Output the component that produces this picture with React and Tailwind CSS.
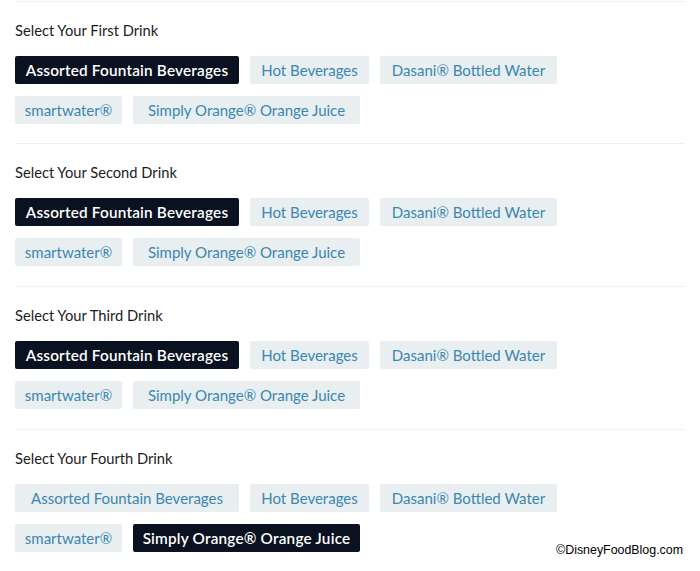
import React, { useState } from 'react';

const DRINKS = [
  { name: "Assorted Fountain Beverages", w: "w-[224px]" },
  { name: "Hot Beverages", w: "w-[119px]" },
  { name: "Dasani® Bottled Water", w: "w-[177px]" },
  { name: "smartwater®", w: "w-[107px]" },
  { name: "Simply Orange® Orange Juice", w: "w-[227px]" },
];

const SECTIONS = [
  { label: "Select Your First Drink", picked: 0 },
  { label: "Select Your Second Drink", picked: 0 },
  { label: "Select Your Third Drink", picked: 0 },
  { label: "Select Your Fourth Drink", picked: 4 },
];

const DrinkPicker = ({ label, initial }) => {
  const [picked, setPicked] = useState(initial);
  return (
    <div className="border-t border-[#eef1f3] pt-[18px] pb-[20px] first:pb-[19px]">
      <p className="text-[14.7px] leading-5 text-[#1c1c1c] mb-4">{label}</p>
      <div className="flex flex-wrap gap-x-[11px] gap-y-3 w-[560px]">
        {DRINKS.map((d, i) => (
          <button
            key={d.name}
            onClick={() => setPicked(i)}
            className={
              i === picked
                ? `${d.w} h-7 rounded-[2px] bg-[#0a1121] text-white text-[15.3px] font-semibold tracking-[0.2px] whitespace-nowrap`
                : `${d.w} h-7 rounded-[2px] bg-[#e9eef1] text-[#3a87b0] text-[15px] whitespace-nowrap`
            }
          >
            {d.name}
          </button>
        ))}
      </div>
    </div>
  );
};

const App = () => {
  return (
    <div className="relative w-[700px] h-[571px] bg-white overflow-hidden" style={{ fontFamily: 'Lato, "Noto Sans", sans-serif' }}>
      <div className="px-[15px] pt-px">
        {SECTIONS.map((s) => (
          <DrinkPicker key={s.label} label={s.label} initial={s.picked} />
        ))}
      </div>
      <span
        className="absolute right-[17px] top-[542px] text-[12.4px] leading-4 text-black"
        style={{ fontFamily: '"Liberation Sans", Arial, sans-serif' }}
      >
        ©DisneyFoodBlog.com
      </span>
    </div>
  );
};

export default App;
